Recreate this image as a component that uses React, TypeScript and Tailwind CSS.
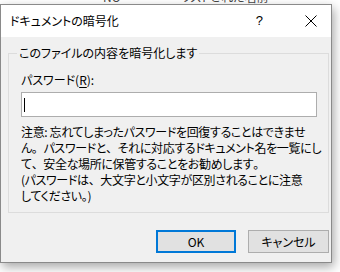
import React from 'react';

const jp = "font-['Noto_Sans_CJK_JP',sans-serif] [font-feature-settings:'palt']";

const notes = [
  '注意: 忘れてしまったパスワードを回復することはできませ',
  'ん。パスワードと、それに対応するドキュメント名を一覧にし',
  'て、安全な場所に保管することをお勧めします。',
  '(パスワードは、大文字と小文字が区別されることに注意',
  'してください。)',
];

// kana are proportional like Yu Gothic UI, but 。、 keep their full width
const NoteLine = ({ text }: { text: string }) => (
  <div>
    {text.split(/([。、])/).map((part, i) =>
      part === '。' || part === '、' ? (
        <span key={i} className="[font-feature-settings:normal]">{part}</span>
      ) : (
        <span key={i}>{part}</span>
      )
    )}
  </div>
);

const CloseIcon = () => (
  <svg width="12" height="12" viewBox="0 0 12 12">
    <path d="M0.5 0.5L11.5 11.5M11.5 0.5L0.5 11.5" stroke="#000" strokeWidth="1" />
  </svg>
);

const App = () => {
  return (
    <div className={`w-[340px] h-[272px] bg-white overflow-hidden text-black ${jp}`}>
      {/* window behind, only its bottom edge shows */}
      <div className="h-[4px] overflow-hidden flex text-[12px] leading-[12px] text-[#444]">
        <span className="ml-[103px] -mt-[9px]">NO</span>
        <span className="ml-[60px] -mt-[9px]">リストされた名前</span>
      </div>

      <div className="w-[332px] border border-[#8a8a8a] bg-[#f0f0f0] shadow-[2px_4px_10px_rgba(0,0,0,0.35)]">
        <div className="h-[32px] bg-white flex items-center pl-[9px] text-[12px]">
          <span>ドキュメントの暗号化</span>
          <span className="ml-auto mr-[42px] text-[13px] font-['Liberation_Sans',sans-serif]">?</span>
          <span className="mr-[14px] flex"><CloseIcon /></span>
        </div>

        <div className="pt-[8px] pb-[9px]">
          <fieldset className="ml-[7px] mr-[2px] border border-[#dcdcdc] pl-[12px] pr-[11px] pb-[8px] min-w-0">
            <legend className="ml-[-4px] px-[2px] text-[12px] leading-[16px]">このファイルの内容を暗号化します</legend>
            <div className="mt-[11px] text-[12px] leading-[16px]">
              パスワード(<span className="underline underline-offset-[2px]">R</span>):
            </div>
            <div className="mt-[4px] h-[25px] border border-[#adadad] bg-white flex items-center pl-[2px]">
              <div className="w-[1px] h-[14px] bg-black" />
            </div>
            <div className="mt-[7px] text-[12px] leading-[16px] tracking-[-0.35px] whitespace-nowrap">
              {notes.map((line) => (
                <NoteLine key={line} text={line} />
              ))}
            </div>
          </fieldset>

          <div className="mt-[17px] flex justify-end gap-[12px] mr-[2px] text-[12px]">
            <button className="w-[80px] h-[23px] bg-[#e1e1e1] border-2 border-[#0078d7]">OK</button>
            <button className="w-[81px] h-[23px] bg-[#e1e1e1] border border-[#adadad]">キャンセル</button>
          </div>
        </div>
      </div>
    </div>
  );
};

export default App;
